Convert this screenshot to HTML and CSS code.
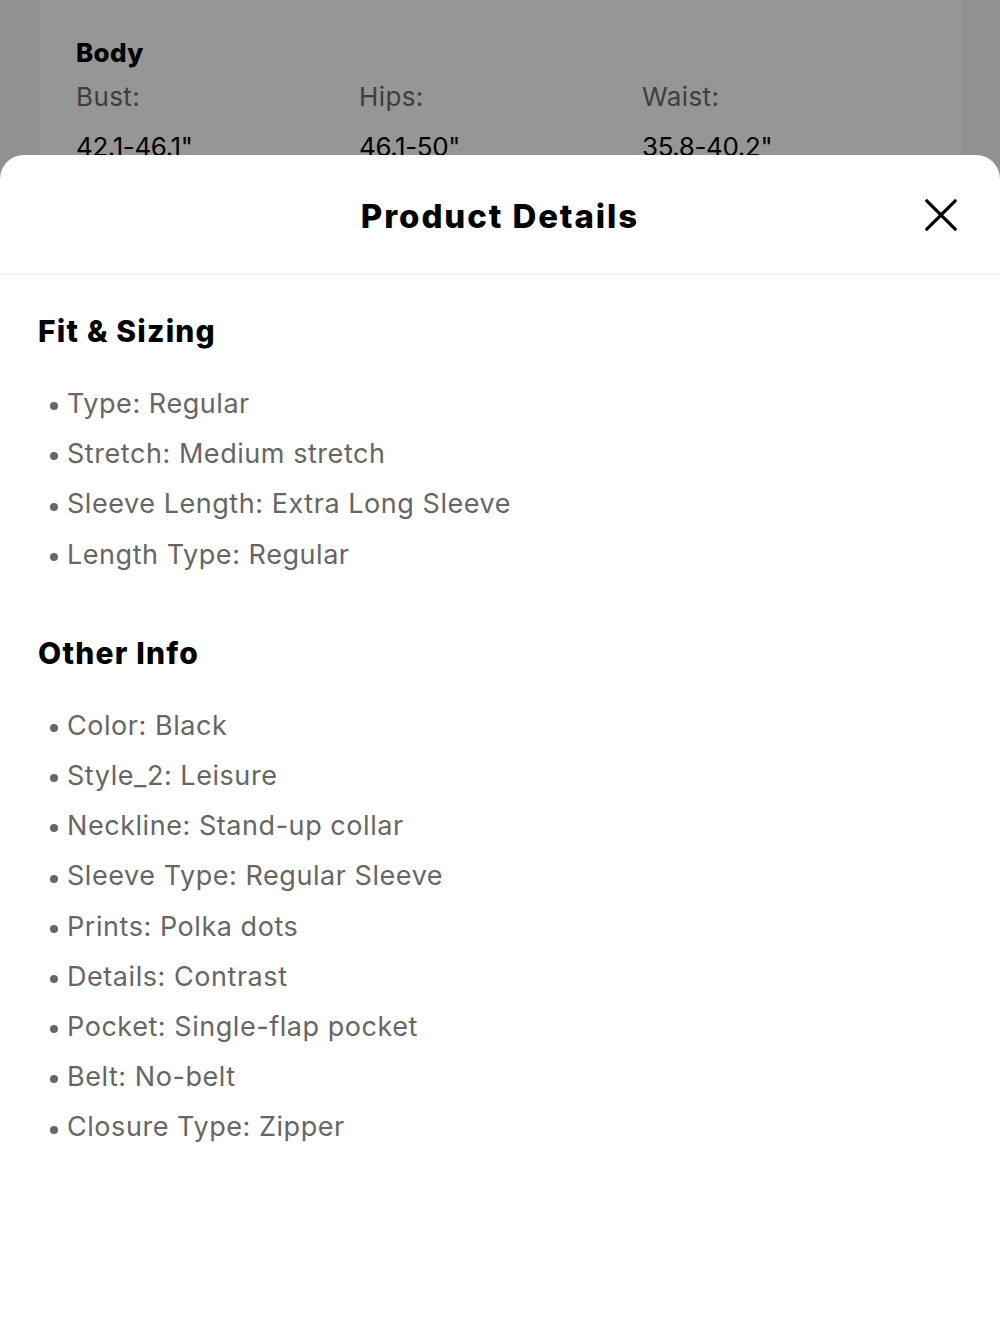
FILE: index.html
```html
<!DOCTYPE html>
<html lang="en">
<head>
<meta charset="utf-8">
<title>Product Details</title>
<link rel="stylesheet" href="styles.css">
</head>
<body>
<div class="page">
  <div class="size-card">
    <h3 class="size-title">Body</h3>
    <div class="size-grid">
      <div class="size-label">Bust:</div>
      <div class="size-label">Hips:</div>
      <div class="size-label">Waist:</div>
      <div class="size-value">42.1-46.1"</div>
      <div class="size-value">46.1-50"</div>
      <div class="size-value">35.8-40.2"</div>
    </div>
  </div>
</div>
<div class="overlay"></div>
<div class="sheet">
  <header class="sheet-header">
    <h1 class="sheet-title">Product Details</h1>
    <button class="close-btn" aria-label="Close">
      <svg width="32" height="32" viewBox="0 0 32 32"><path d="M1.8 1.8 L30.2 30.2 M30.2 1.8 L1.8 30.2" stroke="#000" stroke-width="3.2" stroke-linecap="round" fill="none"/></svg>
    </button>
  </header>
  <div class="sheet-body">
    <section class="section">
      <h2 class="section-title">Fit &amp; Sizing</h2>
      <ul class="attr-list">
        <li>Type: Regular</li>
        <li>Stretch: Medium stretch</li>
        <li>Sleeve Length: Extra Long Sleeve</li>
        <li>Length Type: Regular</li>
      </ul>
    </section>
    <section class="section">
      <h2 class="section-title">Other Info</h2>
      <ul class="attr-list">
        <li>Color: Black</li>
        <li>Style_2: Leisure</li>
        <li>Neckline: Stand-up collar</li>
        <li>Sleeve Type: Regular Sleeve</li>
        <li>Prints: Polka dots</li>
        <li>Details: Contrast</li>
        <li>Pocket: Single-flap pocket</li>
        <li>Belt: No-belt</li>
        <li>Closure Type: Zipper</li>
      </ul>
    </section>
  </div>
</div>
</body>
</html>
```

FILE: styles.css
```css
html, body {
  margin: 0;
  padding: 0;
}
body {
  width: 1000px;
  height: 1333px;
  overflow: hidden;
  font-family: Inter, "Noto Sans", sans-serif;
  background: #f7f7f7;
  position: relative;
}
.page {
  padding: 0 38px 0 40px;
}
.size-card {
  background: #fff;
  border-radius: 14px;
  margin-top: -20px;
  padding: 57px 36px 40px 36px;
  height: 300px;
}
.size-title {
  margin: 0;
  font-size: 26px;
  font-weight: 800;
  color: #000;
  line-height: 32px;
  letter-spacing: 0.3px;
}
.size-grid {
  display: grid;
  grid-template-columns: 283px 283px 1fr;
  row-gap: 18px;
  margin-top: 12px;
}
.size-label {
  font-size: 26px;
  color: #6a6a6a;
  line-height: 32px;
  letter-spacing: 0.4px;
}
.size-value {
  font-size: 26px;
  color: #000;
  line-height: 32px;
  letter-spacing: -0.4px;
}
.overlay {
  position: absolute;
  inset: 0;
  background: rgba(0, 0, 0, 0.41);
}
.sheet {
  position: absolute;
  left: 0;
  right: 0;
  top: 155px;
  bottom: 0;
  background: #fff;
  border-radius: 24px 24px 0 0;
}
.sheet-header {
  height: 119px;
  border-bottom: 1px solid #efefef;
  display: flex;
  align-items: center;
  justify-content: center;
  position: relative;
}
.sheet-title {
  margin: 0 0 -3px 0;
  font-size: 33px;
  font-weight: 800;
  color: #000;
  letter-spacing: 1.9px;
}
.close-btn {
  position: absolute;
  right: 43px;
  top: 44px;
  width: 32px;
  height: 32px;
  padding: 0;
  border: 0;
  background: none;
  display: flex;
}
.sheet-body {
  padding: 38px 38px 0 38px;
}
.section + .section {
  margin-top: 55px;
}
.section-title {
  margin: 0;
  font-size: 30px;
  font-weight: 800;
  color: #000;
  line-height: 36px;
  letter-spacing: 1.2px;
}
.attr-list {
  list-style: none;
  margin: 30px 0 0 0;
  padding: 0 0 0 12px;
}
.attr-list li {
  font-size: 27px;
  line-height: 50.2px;
  color: #666;
  display: flex;
  align-items: center;
  letter-spacing: 0.55px;
}
.attr-list li::before {
  content: "";
  width: 8px;
  height: 8px;
  border-radius: 50%;
  background: #666;
  margin-right: 9px;
  margin-top: 4px;
  flex-shrink: 0;
}
```
